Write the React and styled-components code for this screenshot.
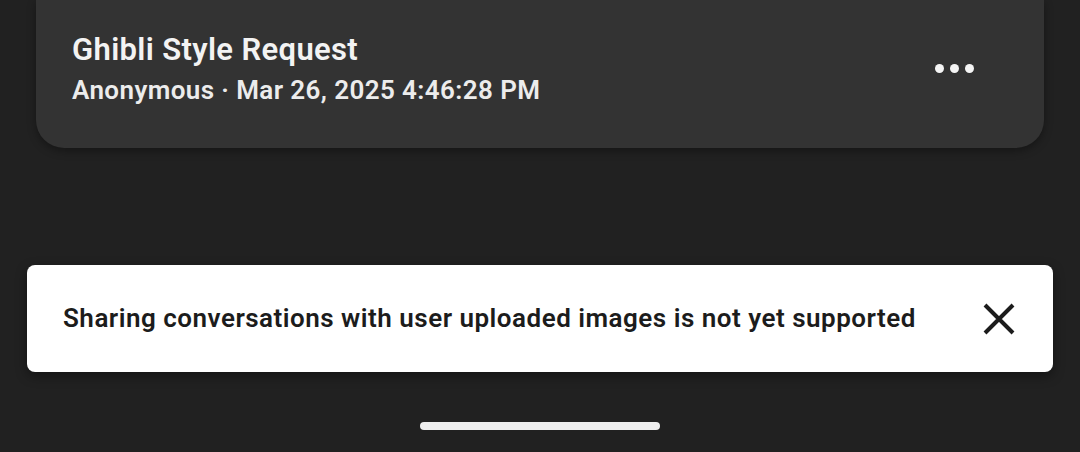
import styled, { createGlobalStyle } from "styled-components"

const GlobalStyle = createGlobalStyle`
  html, body { margin: 0; padding: 0; background: #212121; }
  body { font-family: Roboto, "Noto Sans", sans-serif; }
`

const Screen = styled.div`width: 1080px; height: 452px; background: #212121; display: flex; flex-direction: column; align-items: center; overflow: hidden;`
const Card = styled.div`box-sizing: border-box; width: 1008px; height: 148px; background: #333333; border-radius: 0 0 28px 28px; box-shadow: 0 3px 8px rgba(0,0,0,.35); display: flex; align-items: center; justify-content: space-between; padding: 0 70px 8px 36px;`
const Info = styled.div`display: flex; flex-direction: column; gap: 8px;`
const Title = styled.div`color: #f3f3f3; font-size: 31px; font-weight: 600; line-height: 34px; letter-spacing: 0.35px; margin-top: -3px;`
const Meta = styled.div`color: #ececec; font-size: 26px; font-weight: 600; line-height: 30px; letter-spacing: 0.4px;`
const MoreButton = styled.button`border: 0; background: none; padding: 0; display: flex; gap: 6px; cursor: pointer; margin-top: -4px;`
const Dot = styled.span`width: 9px; height: 9px; border-radius: 50%; background: #f5f5f5;`
const Toast = styled.div`box-sizing: border-box; margin-top: 117px; width: 1026px; height: 107px; background: #ffffff; border-radius: 8px; box-shadow: 0 4px 12px rgba(0,0,0,.4); display: flex; align-items: center; justify-content: space-between; padding: 0 38px 0 36px;`
const ToastText = styled.div`color: #1c1c1c; font-size: 26px; font-weight: 600; letter-spacing: 0.5px; margin-top: -2px;`
const CloseButton = styled.button`border: 0; background: none; padding: 0; display: flex; cursor: pointer;`
const HomeBar = styled.div`margin-top: 50px; width: 240px; height: 8px; border-radius: 4px; background: #eeeeee;`

const App = () => {
    return (
        <Screen>
            <GlobalStyle />
            <Card>
                <Info>
                    <Title>Ghibli Style Request</Title>
                    <Meta>Anonymous · Mar 26, 2025 4:46:28 PM</Meta>
                </Info>
                <MoreButton>
                    <Dot /><Dot /><Dot />
                </MoreButton>
            </Card>
            <Toast>
                <ToastText>Sharing conversations with user uploaded images is not yet supported</ToastText>
                <CloseButton>
                    <svg width="32" height="32" viewBox="0 0 32 32">
                        <path d="M2 2 L30 30 M30 2 L2 30" stroke="#1c1c1c" strokeWidth="4" fill="none" />
                    </svg>
                </CloseButton>
            </Toast>
            <HomeBar />
        </Screen>
    )
}

export default App
